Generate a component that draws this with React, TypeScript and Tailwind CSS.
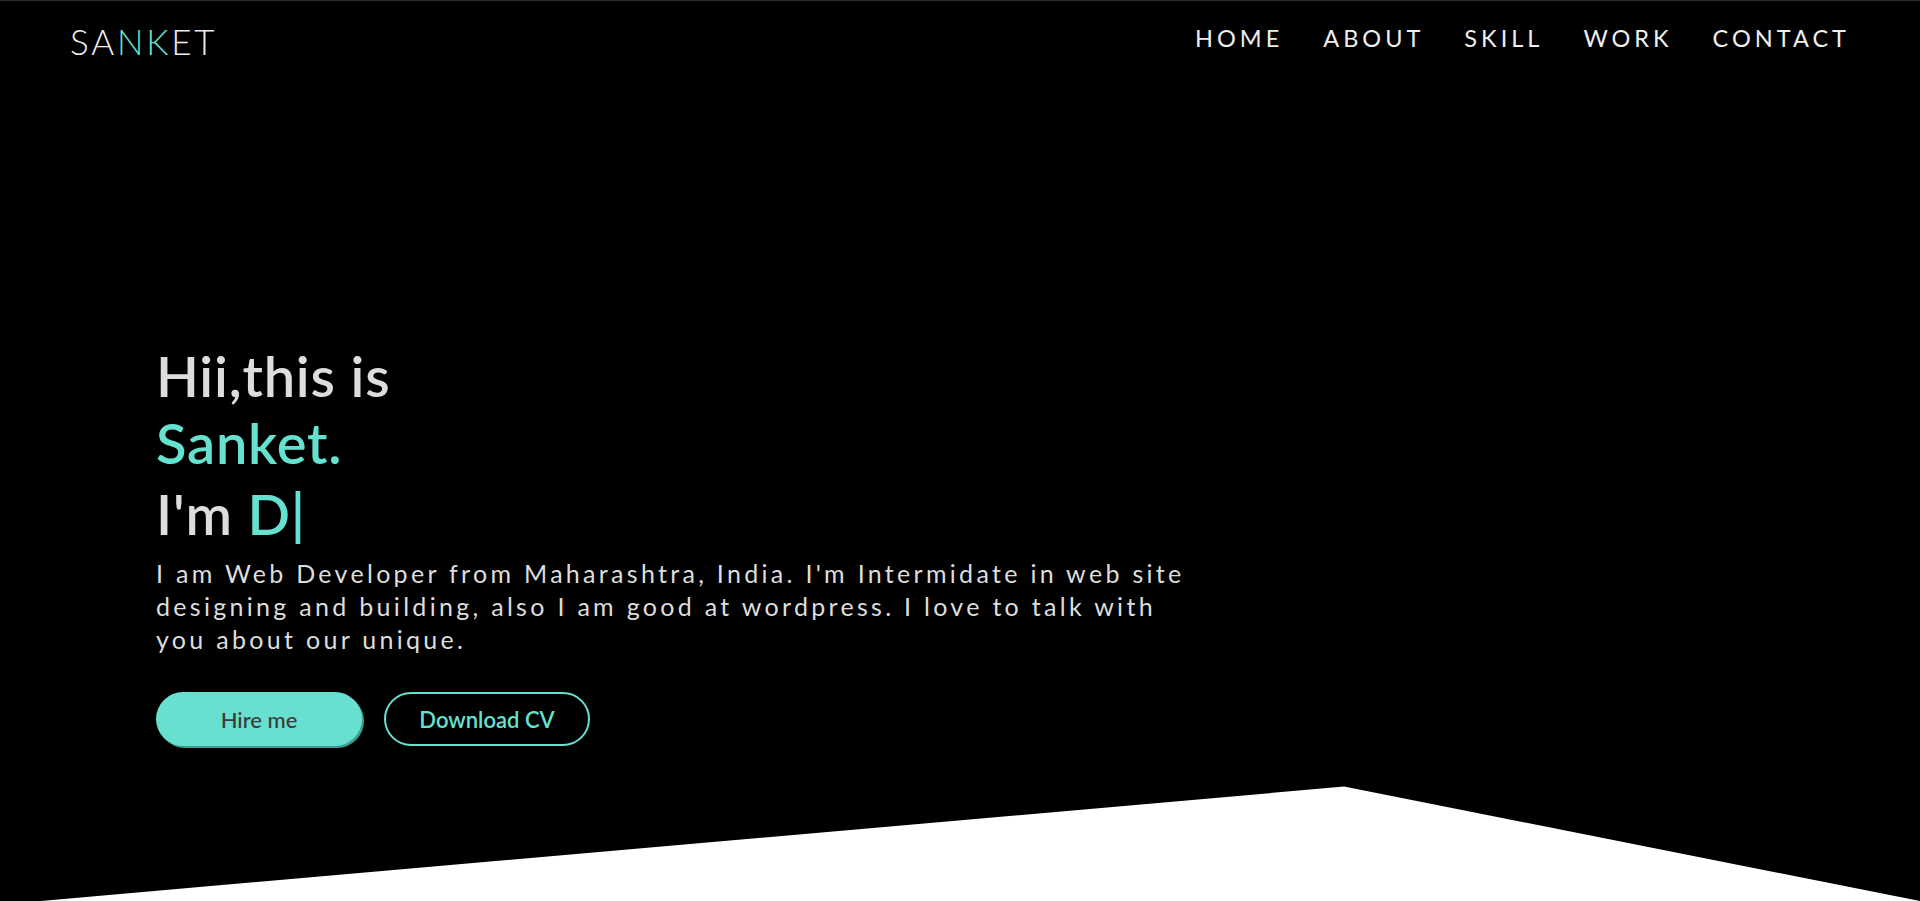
const NAV_LINKS = ["HOME", "ABOUT", "SKILL", "WORK", "CONTACT"];

export default function App() {
    return (
        <div className="min-h-screen bg-white font-['Lato','Liberation_Sans',sans-serif]">
            {/* Hero */}
            <section className="relative h-[901px] border-t border-[#2a2a2a] bg-black [clip-path:polygon(0_0,100%_0,100%_100%,70%_87.3%,0_100.4%)]">
                {/* Navbar */}
                <header className="flex h-[80px] items-center justify-between px-[70px]">
                    <a href="#" className="text-[35px] font-light tracking-[2.8px] text-[#eeeeee]">
                        SA<span className="text-[#64e1cf]">NK</span>ET
                    </a>
                    <nav className="-mt-[4px] flex items-center gap-[40px]">
                        {NAV_LINKS.map((link) => (
                            <a key={link} href="#" className="text-[23.5px] tracking-[4px] text-[#eeeeee]">
                                {link}
                            </a>
                        ))}
                    </nav>
                </header>

                {/* Intro */}
                <div className="pl-[156px] pt-[262px]">
                    <h1 className="text-[56px] font-semibold leading-[66px] tracking-[0.8px] text-[#dddddd]">Hii,this is</h1>
                    <h1 className="text-[56px] font-semibold leading-[68px] tracking-[0.8px] text-[#64e1cf]">Sanket.</h1>
                    <h2 className="text-[56px] font-semibold leading-[74px] tracking-[0.8px] text-[#dddddd]">
                        I'm <span className="text-[#64e1cf]">D|</span>
                    </h2>
                    <p className="mt-[6px] w-[1050px] text-[25px] leading-[33px] tracking-[3.3px] text-[#dddddd]">
                        I am Web Developer from Maharashtra, India. I'm Intermidate in web site designing and building, also I am good at wordpress. I love to talk with you about our unique.
                    </p>
                    <div className="mt-[36px] flex gap-[22px]">
                        <button className="h-[54px] w-[206px] rounded-full bg-[#68e0cf] text-[22px] font-medium text-[#3a3a3a] shadow-[2px_2px_0_#3e9d90]">
                            Hire me
                        </button>
                        <button className="h-[54px] w-[206px] rounded-full border-2 border-[#68e0cf] text-[22px] font-semibold text-[#68e0cf]">
                            Download CV
                        </button>
                    </div>
                </div>
            </section>
        </div>
    );
}
